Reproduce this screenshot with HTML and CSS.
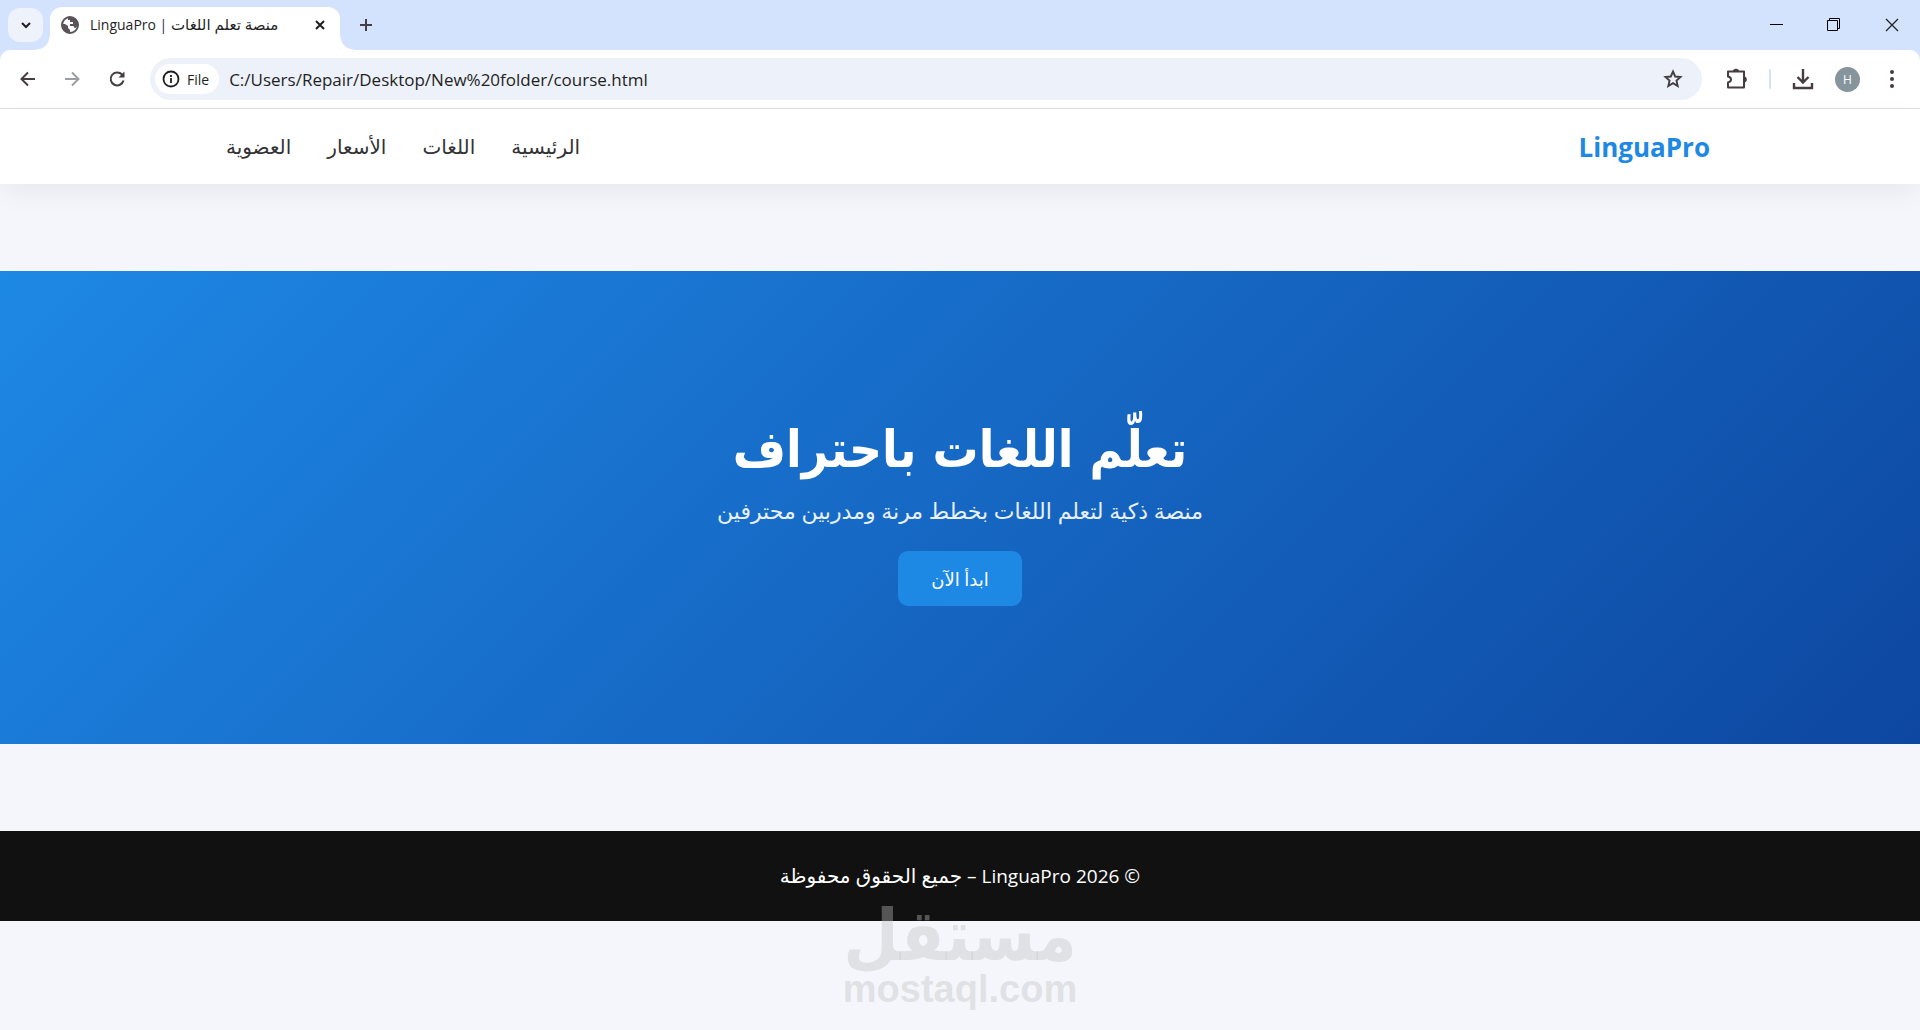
FILE: index.html
```html
<!DOCTYPE html>
<html lang="ar" dir="rtl">

<head>
    <meta charset="UTF-8">
    <meta name="viewport" content="width=device-width, initial-scale=1.0">
    <title>منصة تعلم اللغات | LinguaPro</title>
    <link rel="stylesheet" href="styles.css">
</head>

<body>
    <div class="browser" dir="ltr">
        <div class="tab-strip">
            <button class="tab-search" aria-label="Search tabs">
                <svg width="12" height="12" viewBox="0 0 12 12"><path d="M2 4l4 4 4-4" fill="none" stroke="#1f1f1f" stroke-width="2"/></svg>
            </button>
            <div class="tab">
                <svg class="favicon" width="18" height="18" viewBox="0 0 18 18">
                    <circle cx="9" cy="9" r="8" fill="#fff" stroke="#5b5357" stroke-width="2"/>
                    <path d="M1 8h3l3 2v2l2 2v3C4 17 1 13 1 8zM7 1c5-1 9 2 10 7-1 3-2 4-3 4-1 0-1-2-2-2H9V8h3V6H9V4H7z" fill="#5b5357"/>
                </svg>
                <span class="tab-title">LinguaPro | <span class="tab-ar">منصة تعلم اللغات</span></span>
                <button class="tab-close" aria-label="Close tab">
                    <svg width="10" height="10" viewBox="0 0 10 10"><path d="M1 1l8 8M9 1l-8 8" stroke="#1f1f1f" stroke-width="2"/></svg>
                </button>
            </div>
            <button class="new-tab" aria-label="New tab">
                <svg width="14" height="14" viewBox="0 0 14 14"><path d="M7 1v12M1 7h12" stroke="#453d41" stroke-width="2"/></svg>
            </button>
            <div class="window-controls">
                <button aria-label="Minimize">
                    <svg width="14" height="14" viewBox="0 0 14 14"><path d="M1 6.500h13" stroke="#000"/></svg>
                </button>
                <button aria-label="Restore">
                    <svg width="14" height="14" viewBox="0 0 14 14"><path d="M.5 2.500h10v10H.5zM2.500 2.500v-2h10v10h-2" fill="none" stroke="#000"/></svg>
                </button>
                <button aria-label="Close">
                    <svg width="14" height="14" viewBox="0 0 14 14"><path d="M1 1l12 12M13 1L1 13" stroke="#222" stroke-width="1.300"/></svg>
                </button>
            </div>
        </div>
        <div class="toolbar">
            <button class="tool" aria-label="Back">
                <svg width="20" height="20" viewBox="0 0 20 20"><path d="M17 10H4M10 3.500L3.500 10l6.500 6.500" fill="none" stroke="#453d41" stroke-width="2"/></svg>
            </button>
            <button class="tool" aria-label="Forward">
                <svg width="20" height="20" viewBox="0 0 20 20"><path d="M3 10h13M10 3.500l6.500 6.500-6.500 6.500" fill="none" stroke="#9a9ea2" stroke-width="2"/></svg>
            </button>
            <button class="tool" aria-label="Reload">
                <svg width="20" height="20" viewBox="0 0 20 20"><path d="M17.500 11.500A6.500 6.500 0 1 1 16 5.500l1 1" fill="none" stroke="#453d41" stroke-width="2"/><path d="M18.500 2.500v6h-6z" fill="#453d41"/></svg>
            </button>
            <div class="address">
                <button class="file-chip">
                    <svg width="18" height="18" viewBox="0 0 18 18"><circle cx="9" cy="9" r="7.500" fill="none" stroke="#1f1f1f" stroke-width="1.800"/><path d="M9 8v5M9 5v2" stroke="#1f1f1f" stroke-width="1.800"/></svg>
                    File
                </button>
                <input class="url" type="text" aria-label="Address" value="C:/Users/Repair/Desktop/New%20folder/course.html">
                <button class="star" aria-label="Bookmark">
                    <svg width="20" height="20" viewBox="0 0 20 20"><path d="M10 2.500l2.200 5 5.300.5-4 3.600 1.200 5.400-4.700-2.900L5.300 17l1.200-5.400-4-3.600 5.300-.5z" fill="none" stroke="#453d41" stroke-width="1.900"/></svg>
                </button>
            </div>
            <div class="actions">
                <button aria-label="Extensions">
                    <svg width="22" height="22" viewBox="0 0 22 22"><path d="M2 3.500h16v16H2v-5c4-1 4-5 0-6z" fill="none" stroke="#453d41" stroke-width="2" stroke-linejoin="round"/><path d="M7 3.500a3 2.800 0 0 1 6 0zM18 8.500a2.800 3 0 0 1 0 6z" fill="#453d41"/></svg>
                </button>
                <span class="divider"></span>
                <button aria-label="Downloads">
                    <svg width="22" height="22" viewBox="0 0 22 22"><path d="M11 1v13M5.500 9l5.500 5.500L16.500 9M2 15v5h18v-5" fill="none" stroke="#453d41" stroke-width="2.400"/></svg>
                </button>
                <button class="avatar" aria-label="Profile">H</button>
                <button aria-label="Menu">
                    <svg width="22" height="22" viewBox="0 0 22 22" fill="#453d41"><circle cx="11" cy="4" r="2"/><circle cx="11" cy="11" r="2"/><circle cx="11" cy="18" r="2"/></svg>
                </button>
            </div>
        </div>
    </div>

    <header class="header">
        <div class="container">
            <a class="logo" href="#">LinguaPro</a>
            <nav class="nav">
                <a href="#">الرئيسية</a>
                <a href="#">اللغات</a>
                <a href="#">الأسعار</a>
                <a href="#">العضوية</a>
            </nav>
        </div>
    </header>

    <main>
        <section class="hero">
            <h1>تعلّم اللغات باحتراف</h1>
            <p>منصة ذكية لتعلم اللغات بخطط مرنة ومدربين محترفين</p>
            <button class="btn">ابدأ الآن</button>
        </section>
    </main>

    <footer class="footer">
        © 2026 LinguaPro – <span class="footer-ar">جميع الحقوق محفوظة</span>
        <div class="watermark">
            <span class="watermark-ar">مستقل</span>
            <span class="watermark-en">mostaql.com</span>
        </div>
    </footer>
</body>

</html>
```
FILE: styles.css
```css
* {
    box-sizing: border-box;
    margin: 0;
    padding: 0;
}

body {
    min-height: 100vh;
    font-family: "Segoe UI", "Open Sans", "DejaVu Sans", sans-serif;
    background: #f4f6fb;
    color: #333;
}

button {
    font-family: inherit;
    border: none;
    background: none;
    cursor: pointer;
}

svg {
    display: block;
}

a {
    text-decoration: none;
}

/* Browser bar */
.browser {
    background: #d3e3fd;
}

.tab-strip {
    display: flex;
    height: 50px;
    padding-left: 8px;
}

.tab-search {
    display: flex;
    align-items: center;
    justify-content: center;
    width: 35px;
    height: 34px;
    margin-top: 8px;
    border-radius: 12px;
    background: #edf2fb;
}

.tab {
    position: relative;
    display: flex;
    align-items: center;
    width: 290px;
    height: 43px;
    margin: 7px 0 0 7px;
    padding: 0 15px 8px 11px;
    border-radius: 12px 12px 0 0;
    background: #fff;
}

.tab::before,
.tab::after {
    content: "";
    position: absolute;
    bottom: 0;
    width: 14px;
    height: 14px;
}

.tab::before {
    right: 100%;
    background: radial-gradient(circle at 0 0, transparent 13px, #fff 14px);
}

.tab::after {
    left: 100%;
    background: radial-gradient(circle at 100% 0, transparent 13px, #fff 14px);
}

.tab-title {
    flex: 1;
    margin-left: 11px;
    font-size: 14px;
    line-height: 20px;
    color: #1f1f1f;
    white-space: nowrap;
}

.tab-ar {
    font-size: 15px;
}

.new-tab {
    padding: 0 19px;
}

.window-controls {
    display: flex;
    gap: 44px;
    margin-left: auto;
    padding-right: 21px;
}

.toolbar {
    display: flex;
    align-items: center;
    height: 59px;
    padding: 0 17px 0 18px;
    border-bottom: 1px solid #dedede;
    border-radius: 10px 10px 0 0;
    background: #fff;
}

.tool {
    margin-right: 24px;
}

.address {
    display: flex;
    flex: 1;
    align-items: center;
    height: 42px;
    margin-right: 24px;
    padding: 0 19px 0 5px;
    border-radius: 21px;
    background: #edf1fa;
}

.file-chip {
    display: flex;
    align-items: center;
    gap: 7px;
    height: 30px;
    padding: 0 10px 0 7px;
    border-radius: 15px;
    background: #fff;
    color: #1f1f1f;
    font-size: 14px;
    font-weight: 500;
}

.url {
    flex: 1;
    margin-left: 10px;
    border: none;
    outline: none;
    background: none;
    color: #1f1f1f;
    font-family: inherit;
    font-size: 17px;
}

.actions {
    display: flex;
    align-items: center;
    gap: 21px;
}

.divider {
    width: 2px;
    height: 20px;
    border-radius: 1px;
    background: #d3e3fd;
}

.avatar {
    width: 25px;
    height: 25px;
    border-radius: 50%;
    background: #86949b;
    color: #fff;
    font-size: 12px;
}

/* Header */
.header {
    position: relative;
    background: #fff;
    box-shadow: 0 10px 25px rgba(0, 0, 0, 0.05);
}

.container {
    display: flex;
    justify-content: space-between;
    align-items: center;
    max-width: 1500px;
    height: 75px;
    margin: 0 auto;
}

.logo {
    color: #1e88e5;
    font-size: 26px;
    font-weight: bold;
}

.nav {
    display: flex;
    gap: 36px;
    padding-left: 16px;
}

.nav a {
    color: #333;
    font-size: 20px;
}

/* Hero */
.hero {
    display: flex;
    flex-direction: column;
    align-items: center;
    margin: 87px 0;
    padding: 138px 20px;
    background: linear-gradient(135deg, #1e88e5, #0d47a1);
    color: #fff;
    text-align: center;
}

.hero h1 {
    font-family: "Segoe UI", "DejaVu Sans Condensed", "DejaVu Sans", sans-serif;
    font-size: 51px;
    line-height: 82px;
}

.hero p {
    margin: 2px 0 23px;
    font-size: 22px;
    line-height: 35px;
    opacity: 0.9;
}

.btn {
    width: 124px;
    height: 55px;
    border-radius: 10px;
    background: #1e88e5;
    color: #fff;
    font-size: 18px;
}

/* Footer */
.footer {
    position: relative;
    padding: 30px;
    background: #111;
    color: #fff;
    font-size: 19px;
    line-height: 30px;
    text-align: center;
}

.footer-ar {
    font-size: 20px;
}

.watermark {
    position: absolute;
    top: 70px;
    left: 50%;
    display: flex;
    flex-direction: column;
    align-items: center;
    transform: translateX(-50%);
    color: rgba(192, 192, 192, 0.39);
    font-weight: bold;
}

.watermark-ar {
    font-family: "DejaVu Sans Condensed", "DejaVu Sans", sans-serif;
    font-size: 71px;
    line-height: 70px;
}

.watermark-en {
    font-family: "Liberation Sans", Arial, sans-serif;
    font-size: 38px;
    line-height: 36px;
}
```
